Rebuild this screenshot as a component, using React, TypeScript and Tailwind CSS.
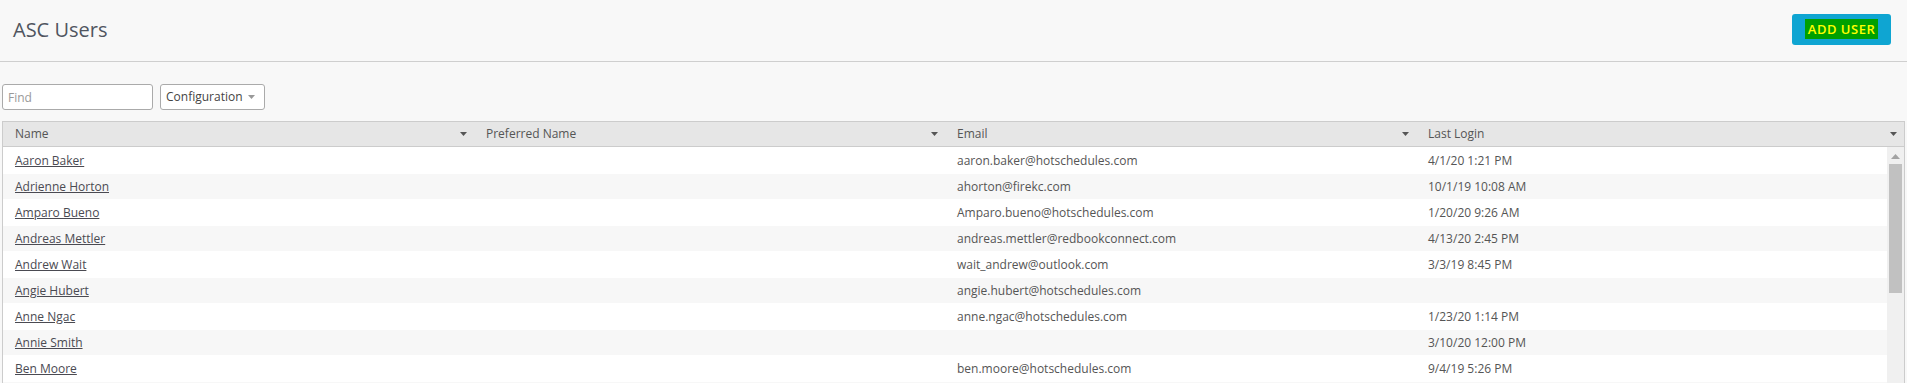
import React from "react";

type User = { name: string; email: string; login: string };

const users: User[] = [
  { name: "Aaron Baker", email: "aaron.baker@hotschedules.com", login: "4/1/20 1:21 PM" },
  { name: "Adrienne Horton", email: "ahorton@firekc.com", login: "10/1/19 10:08 AM" },
  { name: "Amparo Bueno", email: "Amparo.bueno@hotschedules.com", login: "1/20/20 9:26 AM" },
  { name: "Andreas Mettler", email: "andreas.mettler@redbookconnect.com", login: "4/13/20 2:45 PM" },
  { name: "Andrew Wait", email: "wait_andrew@outlook.com", login: "3/3/19 8:45 PM" },
  { name: "Angie Hubert", email: "angie.hubert@hotschedules.com", login: "" },
  { name: "Anne Ngac", email: "anne.ngac@hotschedules.com", login: "1/23/20 1:14 PM" },
  { name: "Annie Smith", email: "", login: "3/10/20 12:00 PM" },
  { name: "Ben Moore", email: "ben.moore@hotschedules.com", login: "9/4/19 5:26 PM" },
];

function Caret() {
  return (
    <svg width="7" height="4" viewBox="0 0 7 4" className="shrink-0">
      <path d="M0 0 L7 0 L3.5 4 Z" fill="#555" />
    </svg>
  );
}

function HeadCell({ label }: { label: string }) {
  return (
    <div className="flex items-center justify-between pl-3 pr-[7px]">
      <span>{label}</span>
      <Caret />
    </div>
  );
}

export default function App() {
  return (
    <div
      className="w-full h-[383px] overflow-hidden bg-[#f8f8f8] text-[#555]"
      style={{ fontFamily: '"Open Sans", "Liberation Sans", sans-serif' }}
    >
      {/* page header */}
      <div className="h-[62px] flex items-center justify-between pl-[13px] pr-4 border-b border-[#cfcfcf]">
        <h1 className="text-[20px] text-[#505560] -mt-[2px]">ASC Users</h1>
        <button className="w-[99px] h-[31px] -mt-[3px] rounded-[3px] bg-[#0fa5d2] flex items-center justify-center">
          <span className="bg-[#00a000] text-[#ffff00] text-[13px] font-semibold tracking-[0.5px] px-[3px] leading-[20px]">
            ADD USER
          </span>
        </button>
      </div>

      {/* toolbar */}
      <div className="flex gap-[7px] pl-[2px] mt-[22px]">
        <input
          placeholder="Find"
          className="w-[151px] h-[26px] rounded-[3px] border border-[#aaa] bg-white px-[5px] text-[12px] placeholder:text-[#999] outline-none"
        />
        <div className="w-[105px] h-[26px] rounded-[3px] border border-[#aaa] bg-white flex items-center justify-between pl-[5px] pr-[9px] text-[12px] text-[#444]">
          <span>Configuration</span>
          <svg width="7" height="4" viewBox="0 0 7 4">
            <path d="M0 0 L7 0 L3.5 4 Z" fill="#999" />
          </svg>
        </div>
      </div>

      {/* grid */}
      <div className="ml-[2px] mr-[2px] mt-[11px] border border-[#ccc] bg-white text-[12px]">
        <div className="grid grid-cols-[471px_471px_471px_1fr] h-[25px] bg-[#e6e6e6] border-b border-[#ccc]">
          <HeadCell label="Name" />
          <HeadCell label="Preferred Name" />
          <HeadCell label="Email" />
          <HeadCell label="Last Login" />
        </div>
        <div className="flex">
          <div className="flex-1">
            {users.map((u, i) => (
              <div
                key={u.name}
                className={
                  i % 2 === 0
                    ? "grid grid-cols-[471px_471px_471px_1fr] h-[27px] items-center bg-white"
                    : "grid grid-cols-[471px_471px_471px_1fr] h-[25px] items-center bg-[#f7f7f7]"
                }
              >
                <div className="pl-3">
                  <a className="underline text-[#4a4a52]">{u.name}</a>
                </div>
                <div className="pl-3"></div>
                <div className="pl-3">{u.email}</div>
                <div className="pl-3">{u.login}</div>
              </div>
            ))}
            <div className="h-[25px] bg-[#f7f7f7]" />
          </div>
          <div className="w-[17px] bg-[#f0f0f0] flex flex-col items-center">
            <svg width="9" height="5" viewBox="0 0 9 5" className="mt-[7px]">
              <path d="M0 5 L9 5 L4.5 0 Z" fill="#a3a3a3" />
            </svg>
            <div className="mt-[5px] w-[13px] h-[129px] bg-[#c1c1c1]" />
          </div>
        </div>
      </div>
    </div>
  );
}
